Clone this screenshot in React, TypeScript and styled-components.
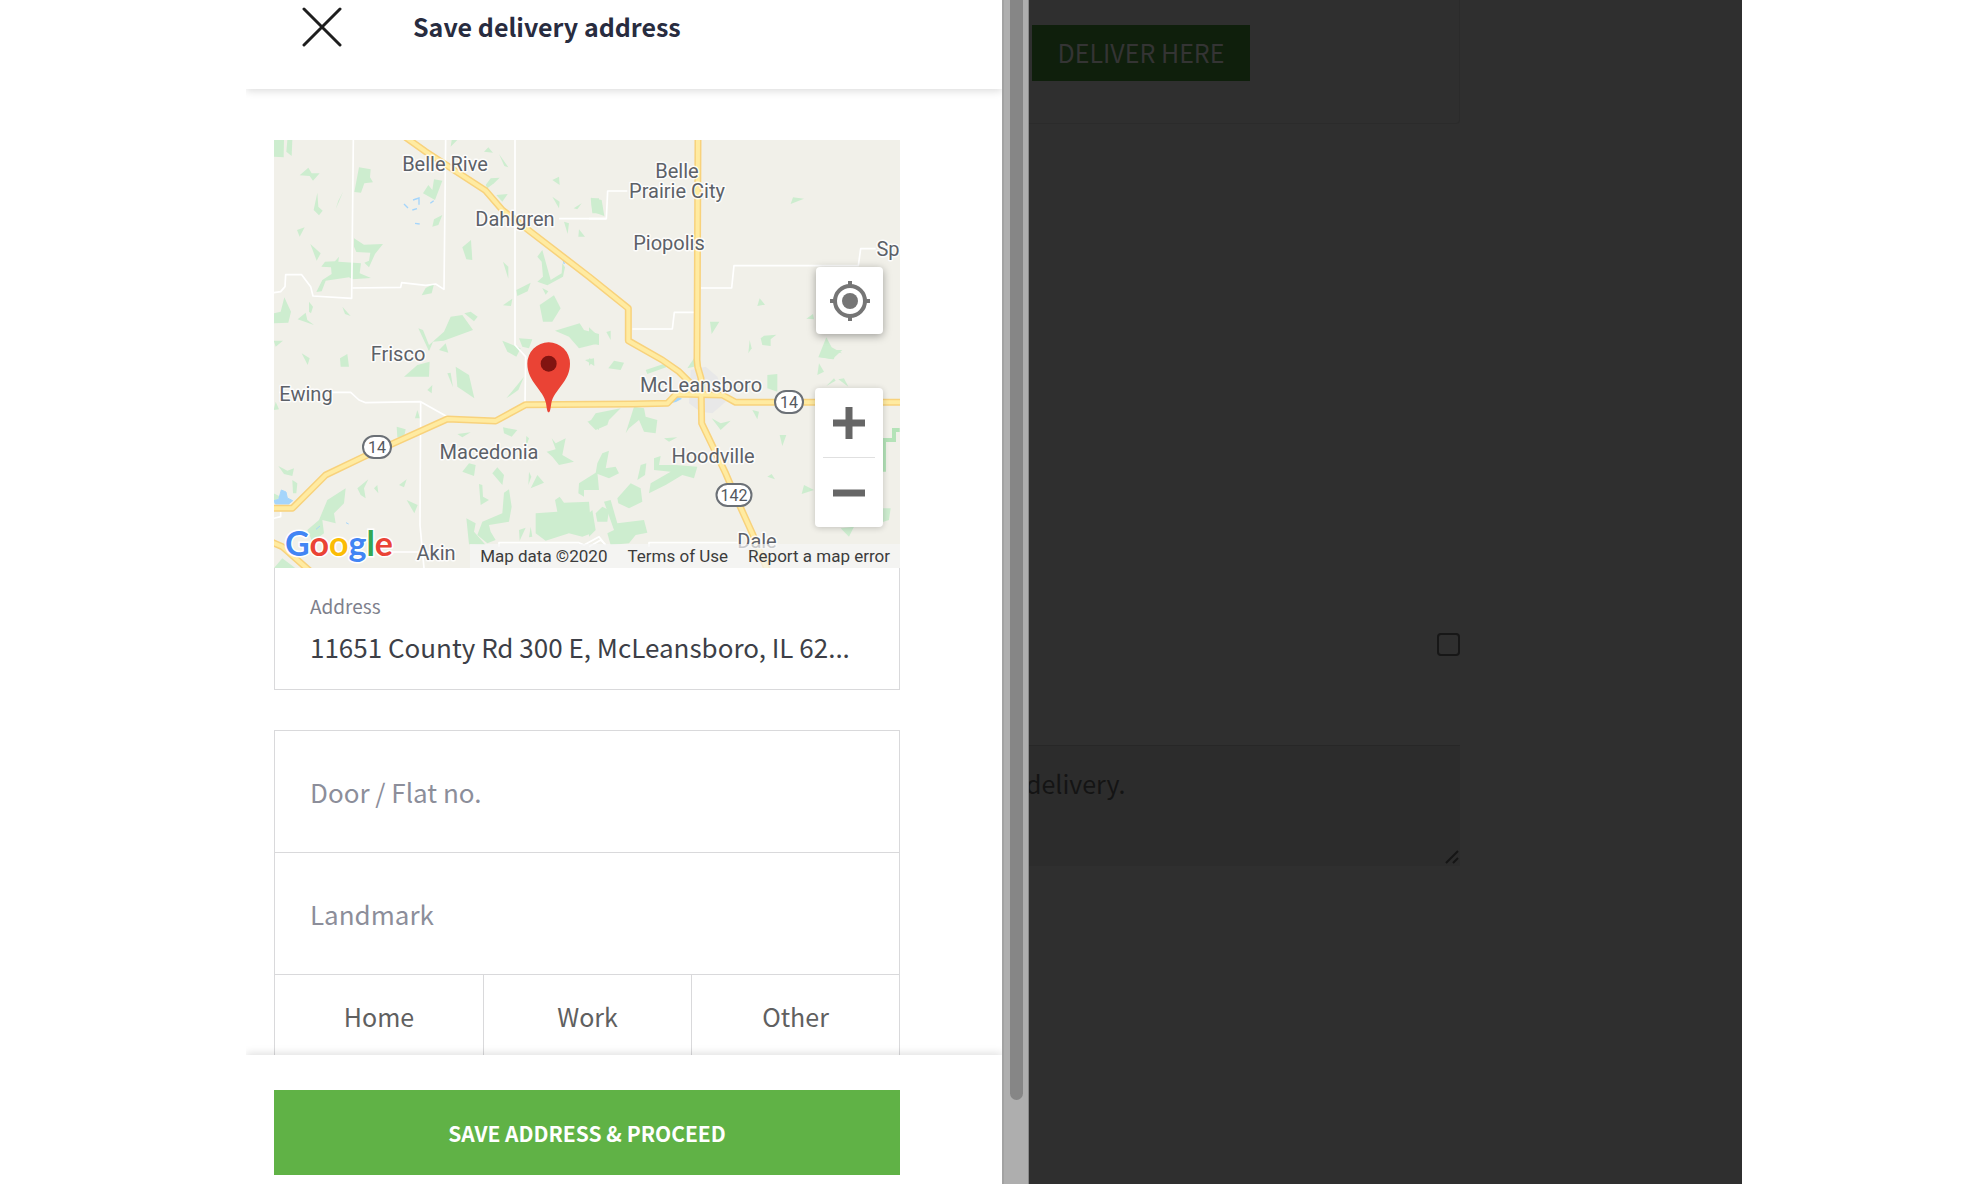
import React from "react";
import styled, { createGlobalStyle } from "styled-components";

const sans = '"Noto Sans CJK SC", "Noto Sans", sans-serif';
const mapSans = 'Roboto, "Liberation Sans", sans-serif';
const line = "#d9d9db";

const GlobalStyle = createGlobalStyle`
  *, *::before, *::after { box-sizing: border-box; }
  body { margin: 0; background: #fff; font-family: ${sans}; }
  button, input, textarea { font-family: inherit; margin: 0; }
`;

const Page = styled.div`
  display: grid;
  grid-template-columns: minmax(0, 756fr) 27px minmax(0, 713fr);
  grid-template-rows: minmax(0, 1fr);
  height: 100vh;
  padding: 0 246px;
  overflow: hidden;
`;

const Drawer = styled.section`
  display: flex;
  flex-direction: column;
  min-width: 0;
  background: #fff;
`;

const Header = styled.header`
  position: relative;
  z-index: 1;
  display: flex;
  align-items: flex-start;
  gap: 71px;
  padding: 7px 56px 42px;
  background: #fff;
  box-shadow: 0 2px 8px rgba(0, 0, 0, 0.14);
  clip-path: inset(0 0 -12px 0);
`;

const CloseButton = styled.button`
  display: block;
  width: 40px;
  height: 40px;
  padding: 0;
  border: 0;
  background: none;
`;

const Title = styled.h1`
  margin: 0;
  color: #282c3f;
  font-size: 25px;
  font-weight: 700;
  line-height: 38px;
`;

const Body = styled.div`
  flex: 1;
  min-height: 0;
  overflow: hidden;
  padding: 51px 102px 0 28px;
`;

const MapFrame = styled.div`
  position: relative;
  height: 428px;
  overflow: hidden;
  background: #f1f0e9;
  font-family: ${mapSans};
`;

const MapDrawing = styled.svg`
  display: block;
  width: 100%;
  height: 100%;
`;

const Credits = styled.div`
  position: absolute;
  right: 0;
  bottom: 0;
  display: flex;
  gap: 20px;
  padding: 0 10px;
  background: rgba(245, 245, 245, 0.7);
  color: #3c3c3c;
  font-size: 17px;
  font-weight: 400;
  line-height: 24px;
  white-space: nowrap;
`;

const CreditLink = styled.a`
  color: inherit;
  text-decoration: none;
`;

const MapControls = styled.div`
  position: absolute;
  top: 127px;
  right: 17px;
  display: flex;
  flex-direction: column;
  align-items: flex-end;
  gap: 54px;
`;

const LocateButton = styled.button`
  display: grid;
  place-items: center;
  width: 67px;
  height: 67px;
  padding: 0;
  border: 0;
  border-radius: 4px;
  background: #fff;
  box-shadow: 0 2px 8px rgba(0, 0, 0, 0.35);
`;

const ZoomGroup = styled.div`
  display: flex;
  flex-direction: column;
  align-items: center;
  border-radius: 4px;
  background: #fff;
  box-shadow: 0 1px 6px rgba(0, 0, 0, 0.2);
`;

const ZoomButton = styled.button`
  display: grid;
  place-items: center;
  width: 68px;
  height: 69px;
  padding: 0;
  border: 0;
  background: none;
`;

const ZoomRule = styled.div`
  width: 52px;
  height: 1px;
  background: #e0e0e0;
`;

const AddressField = styled.div`
  display: flex;
  flex-direction: column;
  height: 122px;
  margin-bottom: 40px;
  padding: 24px 35px 0;
  border: 1px solid ${line};
  border-top: 0;
`;

const FieldLabel = styled.label`
  color: #7e808c;
  font-size: 19px;
  line-height: 28px;
`;

const AddressInput = styled.input`
  width: 100%;
  height: 52px;
  padding: 0;
  border: 0;
  outline: 0;
  background: none;
  color: #3d3f47;
  font-size: 26px;
`;

const FieldGroup = styled.div`
  border: 1px solid ${line};
`;

const TextField = styled.input`
  display: block;
  width: 100%;
  height: 122px;
  padding: 0 35px;
  border: 0;
  border-bottom: 1px solid ${line};
  outline: 0;
  color: #3d3f47;
  font-size: 26px;
  &::placeholder { color: #8c8e9a; opacity: 1; }
`;

const TagRow = styled.div`
  display: grid;
  grid-template-columns: repeat(3, 1fr);
`;

const TagButton = styled.button`
  height: 84px;
  padding: 0 0 2px;
  border: 0;
  background: none;
  color: #606060;
  font-size: 25px;
  & + & { border-left: 1px solid ${line}; }
`;

const Footer = styled.footer`
  position: relative;
  z-index: 1;
  padding: 35px 102px 9px 28px;
  background: #fff;
  box-shadow: 0 -2px 8px rgba(0, 0, 0, 0.12);
  clip-path: inset(-12px 0 0 0);
`;

const SaveButton = styled.button`
  display: block;
  width: 100%;
  height: 85px;
  padding: 0;
  border: 0;
  background: #60b246;
  color: #fff;
  font-size: 21px;
  font-weight: 700;
`;

const Scrollbar = styled.div`
  padding: 0 5px 84px 6px;
  border-left: 2px solid #a2a2a2;
  border-right: 1px solid #888;
  background: #aeaeae;
`;

const ScrollThumb = styled.div`
  height: 100%;
  border-radius: 0 0 7px 7px;
  background: #868686;
`;

const Backdrop = styled.main`
  display: flex;
  flex-direction: column;
  min-width: 0;
  padding-right: 282px;
  background: #2f2f2f;
`;

const AddressCard = styled.div`
  height: 124px;
  padding: 25px 3px 0;
  border: 1px solid #2b2b2b;
  border-top: 0;
  border-left: 0;
  border-radius: 0 0 4px 0;
`;

const DeliverButton = styled.button`
  width: 218px;
  height: 56px;
  padding: 0 0 2px;
  border: 0;
  background: #0f1f0c;
  color: #343434;
  font-size: 25px;
  white-space: nowrap;
`;

const OptIn = styled.input`
  appearance: none;
  align-self: flex-end;
  width: 23px;
  height: 23px;
  margin: 509px 0 89px;
  border: 2px solid #171717;
  border-radius: 4px;
`;

const NoteWrap = styled.div`
  position: relative;
`;

const Note = styled.textarea`
  display: block;
  width: 100%;
  height: 121px;
  padding: 17px 0 0;
  border: 0;
  border-top: 1px solid #272727;
  background: #2c2c2c;
  color: #141414;
  font-size: 25px;
  line-height: 40px;
  text-indent: -3px;
  resize: none;
  outline: 0;
  overflow: hidden;
`;

const Grip = styled.svg`
  position: absolute;
  right: 1px;
  bottom: 2px;
`;

const Label = styled.text`
  fill: #5c6168;
  stroke: #fff;
  stroke-width: 3px;
  stroke-opacity: 0.85;
  stroke-linejoin: round;
  paint-order: stroke;
  font-family: ${mapSans};
  font-size: 20px;
  text-anchor: middle;
`;

const ShieldText = styled.text`
  fill: #54585e;
  font-family: ${mapSans};
  font-size: 16px;
  text-anchor: middle;
`;

const Wordmark = styled.text`
  stroke: #fff;
  stroke-width: 3px;
  paint-order: stroke;
  font-family: Lato, sans-serif;
  font-size: 34px;
  font-weight: 700;
`;

type Tile = { shift: string; woods: string[]; lanes: string[]; highways: string[] };

// The terrain is kept as four quadrants, each drawn at three units to the pixel.
const tiles: Tile[] = [
  {
    shift: "translate(-15 -30)",
    woods: [
      "14,30 45,30 44,82 14,80", "55,30 70,30 68,78 52,65", "92,136 118,113 128,130 152,130 132,152 122,138",
      "270,112 305,118 303,142 312,157 286,160 276,188 256,186", "145,188 148,230 161,242 150,256 134,240",
      "222,186 200,238 208,212", "84,300 107,292 92,320", "124,342 155,370 143,392",
      "255,325 285,344 342,342 318,372 300,412 286,398 300,392 304,368 262,366 255,350",
      "157,410 168,395 198,394 210,380 208,395 276,400 272,430 306,444 250,448 240,442 170,452 158,484 142,486 160,450 188,432 186,412",
      "458,496 470,474 495,462 488,490", "46,502 66,545 58,578 14,580 14,550 35,545", "120,515 132,530 126,550 120,545",
      "86,568 110,548 115,570 135,585", "220,530 245,558 228,552", "14,632 42,632 20,650", "548,30 565,30 545,50",
      "645,65 658,52 672,68", "690,72 718,112 706,108", "650,165 665,145 692,143 675,160 655,175", "682,195 716,192 700,215",
      "495,148 520,152 498,210 462,190 478,165 490,180", "490,290 495,268 520,255 508,285", "580,352 606,330 610,390 592,388",
      "702,395 718,410 718,446", "805,380 820,360 845,450 878,430 880,400 888,412 882,440 835,466 805,455 822,440 818,395",
      "742,480 785,458 776,484 745,498", "820,474 838,484 830,494", "702,526 730,506 726,528",
      "812,525 855,496 875,535 850,575 822,575", "850,150 870,140 872,165", "850,200 872,215 870,235", "914,235 938,220 925,238",
      "965,205 990,205 990,250 970,250", "885,275 900,280 896,312", "930,298 948,320 928,320", "586,550 605,545 626,560 615,574",
      "545,560 580,555 612,600 524,632 492,635 480,664 448,595 462,600 480,645 525,605", "510,660 530,640 538,668",
      "700,632 755,655 742,680 715,665", "750,625 790,628 780,655 760,650", "858,602 932,580 945,600 990,612 990,640 930,655 900,620",
    ],
    lanes: [
      "14,488 35,485 48,470 50,434 98,434 125,470 132,498 248,505 253,30", "250,474 395,472 398,458 470,466 500,462 525,478 530,30",
      "738,30 738,645 770,680 768,820", "870,266 1012,266",
    ],
    highways: ["410,22 470,65 650,182 700,240 960,440 1078,535 1078,632 1180,690 1230,725 1265,760"],
  },
  {
    shift: "translate(945 -30)",
    woods: [
      "6,203 38,210 46,258 10,245", "605,222 612,202 645,206", "505,528 512,505 528,524", "363,575 391,575 368,612",
      "515,625 525,617 562,614 545,628 545,648 520,645", "482,630 488,655 478,670", "652,566 672,552 675,568",
      "712,622 728,652 760,670 738,666 735,688 688,682", "0,592 30,620 30,645 0,640", "52,606 65,602 65,630",
    ],
    lanes: ["0,266 52,266 56,183 115,183", "335,474 428,474 435,407 808,407 815,356 860,356", "130,597 250,597 256,547 315,547"],
    highways: ["327,20 324,690 326,710 336,745 338,880 410,1030 440,1100 490,1210 535,1320"],
  },
  {
    shift: "translate(-15 630)",
    woods: [
      "98,10 122,25 116,45", "213,25 235,12 240,50 215,50", "405,80 445,45 482,35 480,80", "535,70 545,68 552,112",
      "560,50 600,75 616,145 565,110", "712,145 765,80 748,120", "475,120 490,105 488,130", "438,205 445,180 453,205",
      "14,180 20,155 30,178", "383,230 410,238 405,262 385,262", "565,252 605,247 580,262", "702,232 745,240 728,260 705,250",
      "955,215 990,200 990,240", "848,265 860,280 890,265 880,315 915,335 870,345 850,320 833,305 860,298", "772,258 780,265 770,295",
      "580,365 600,340 620,345 615,378", "28,348 55,362 75,355 70,378 45,372", "265,415 298,388 285,415 290,445 275,435",
      "315,415 325,405 328,430", "390,405 413,388 405,412", "413,450 446,465 436,490", "670,370 685,352 705,375 700,405",
      "780,365 787,380 778,405", "785,415 805,375 825,398", "630,402 640,405 642,440 660,450 635,465",
      "705,428 720,418 728,470 720,515 660,525 665,545 680,570 655,580 625,555 640,515 700,490", "592,505 620,520 615,545 650,585 600,583",
      "750,540 770,533 752,572", "785,530 790,560 780,562", "800,490 865,485 858,450 872,440 885,458 960,455 968,550 940,560 900,550 830,572 800,550",
      "930,400 985,365 990,420 945,420 945,440 928,430", "175,450 230,415 225,460 195,490 200,520 160,510 165,550 130,575 115,540 150,510",
      "14,655 40,625 80,655", "70,390 85,400 82,430 72,430", "14,430 35,440 14,455", "865,70 878,90 870,95", "948,30 975,25 976,48",
    ],
    lanes: [
      "30,127 245,127 270,150 290,158 455,155 535,200", "455,155 453,525 465,655", "360,606 560,606",
      "690,590 690,578 930,578 945,585 990,560 1010,585", "14,505 35,500 35,485",
    ],
    highways: ["5,475 70,475 125,420 170,375 285,320 535,207 680,213 770,164 1090,162 1195,160 1222,132 1360,135 1400,157 1900,157", "5,575 40,590 125,665"],
  },
  {
    shift: "translate(945 630)",
    woods: [
      "58,55 75,32 105,38 95,60", "170,60 230,40 250,45 175,72", "295,55 315,25 315,50", "0,25 15,30 0,48",
      "0,220 20,190 95,175 60,210 55,225 20,240", "110,250 135,170 165,175 170,200 205,210 200,250 165,245 150,210 120,235",
      "368,205 395,220 425,212 395,240", "490,180 510,185 505,208", "535,75 565,72 565,125 535,115", "685,75 690,40 705,65",
      "690,20 700,0 760,0 730,28", "572,255 592,255 580,288", "225,265 265,262 240,275", "535,380 548,372 558,388",
      "638,432 645,405 675,420", "40,310 60,302 50,355 80,350 90,370 60,385 20,370 25,340", "145,390 155,345 172,340 168,375",
      "195,325 215,318 210,345 260,345 325,350 315,385 280,375 230,405 180,430 185,400 245,365 195,360",
      "85,445 125,400 155,415 160,455 120,475 88,460", "20,490 40,470 60,480 55,515 25,515",
      "45,455 65,450 85,520 165,510 175,548 140,555 120,580 65,585 55,550 75,540", "0,490 10,480 20,540 0,560",
      "755,535 795,530 780,560", "880,475 905,475 900,510 870,520", "712,108 735,85 740,92", "748,88 765,85 778,110", "0,395 20,385 25,405 0,415",
    ],
    lanes: ["0,590 35,570 50,585", "180,590 180,578 450,578"],
    highways: [],
  },
];

const places: [string, number, number][] = [
  ["Belle Rive", 171, 31], ["Dahlgren", 241, 86], ["Belle", 403, 38], ["Prairie City", 403, 58], ["Piopolis", 395, 110],
  ["Sp", 614, 116], ["Frisco", 124, 221], ["Ewing", 32, 261], ["Macedonia", 215, 319], ["McLeansboro", 427, 252],
  ["Hoodville", 439, 323], ["Dale", 483, 408], ["Akin", 162, 420],
];

const shields: [string, number, number, number][] = [["14", 103, 307, 28], ["14", 515, 262, 28], ["142", 460, 355, 35]];

const letters: [string, string][] = [
  ["G", "#4285f4"], ["o", "#ea4335"], ["o", "#fbbc05"], ["g", "#4285f4"], ["l", "#34a853"], ["e", "#ea4335"],
];

function AreaMap() {
  return (
    <MapDrawing viewBox="0 0 626 428" preserveAspectRatio="xMidYMid slice" role="img" aria-label="Map around McLeansboro">
      <g transform="scale(0.33333)">
        {tiles.map((t) => (
          <g key={t.shift} transform={t.shift} fill="#cdedcf">
            {t.woods.map((p) => <polygon key={p} points={p} />)}
          </g>
        ))}
        <g transform="translate(-15 -30)" fill="none" stroke="#a5d5fb" strokeWidth="4">
          <path d="M405 222l12 12M432 210l18-6v20M430 240l14-4M438 280l14 2M484 220l10-8M882 388l4 14" />
        </g>
        <path d="M0 1082l14-4 8-28 14 6 4 18 16 8-12 10H4zM126 1168l12-10M216 1148l8 4" fill="#a5d5fb" stroke="#a5d5fb" strokeWidth="3" />
        <path d="M1250 690l45-10 35 30 25 75-40 35-35-5-35-25z" fill="#e8e8e8" />
        <path d="M1190 790l18-22 16 8-18 10z" fill="#a5d5fb" />
        <path d="M1877 870h-17v30h-30v95" fill="none" stroke="#b4e3b8" strokeWidth="12" />
        {tiles.map((t) => (
          <g key={t.shift} transform={t.shift} fill="none" stroke="#fff" strokeWidth="5" strokeLinejoin="round">
            {t.lanes.map((p) => <polyline key={p} points={p} />)}
          </g>
        ))}
        {[{ c: "#f8d27c", w: 21 }, { c: "#ffeba1", w: 12 }].map((s) => (
          <g key={s.c} stroke={s.c} strokeWidth={s.w} fill="none" strokeLinejoin="round">
            {tiles.map((t) => (
              <g key={t.shift} transform={t.shift}>
                {t.highways.map((p) => <polyline key={p} points={p} />)}
              </g>
            ))}
          </g>
        ))}
      </g>
      {shields.map(([n, x, y, w]) => (
        <g key={`${n}-${x}`}>
          <rect x={x - w / 2} y={y - 11} width={w} height="22" rx="11" fill="#fff" stroke="#6b7076" strokeWidth="2" />
          <ShieldText x={x} y={y + 6}>{n}</ShieldText>
        </g>
      ))}
      {places.map(([name, x, y]) => <Label key={name} x={x} y={y}>{name}</Label>)}
      <g transform="scale(0.33333) translate(-15 630)">
        <path d="M839 187C835 187 834 180 831 160C824 120 775 95 775 41A64 64 0 0 1 903 41C903 95 854 120 847 160C844 180 843 187 839 187Z" fill="#ea4335" />
        <circle cx="839" cy="41" r="24" fill="#811411" />
      </g>
      <Wordmark x="11" y="416">
        {letters.map(([l, c], i) => <tspan key={i} fill={c}>{l}</tspan>)}
      </Wordmark>
    </MapDrawing>
  );
}

export default function App() {
  return (
    <>
      <GlobalStyle />
      <Page>
        <Drawer aria-label="Save delivery address">
          <Header>
            <CloseButton aria-label="Close">
              <svg width="40" height="40" viewBox="0 0 40 40" fill="none" stroke="#1e1e1e" strokeWidth="3" strokeLinecap="round">
                <path d="M2 2L38 38M38 2L2 38" />
              </svg>
            </CloseButton>
            <Title>Save delivery address</Title>
          </Header>
          <Body>
            <MapFrame>
              <AreaMap />
              <Credits>
                <span>Map data ©2020</span>
                <CreditLink href="#terms">Terms of Use</CreditLink>
                <CreditLink href="#report">Report a map error</CreditLink>
              </Credits>
              <MapControls>
                <LocateButton aria-label="Use my location">
                  <svg width="40" height="40" viewBox="0 0 40 40" fill="none" stroke="#757575" strokeWidth="4">
                    <circle cx="20" cy="20" r="15" />
                    <circle cx="20" cy="20" r="8" fill="#757575" stroke="none" />
                    <path d="M20 0v6M20 34v6M0 20h6M34 20h6" />
                  </svg>
                </LocateButton>
                <ZoomGroup>
                  <ZoomButton aria-label="Zoom in">
                    <svg width="32" height="32" viewBox="0 0 32 32" stroke="#666" strokeWidth="7"><path d="M16 0v32M0 16h32" /></svg>
                  </ZoomButton>
                  <ZoomRule />
                  <ZoomButton aria-label="Zoom out">
                    <svg width="32" height="32" viewBox="0 0 32 32" stroke="#666" strokeWidth="7"><path d="M0 16h32" /></svg>
                  </ZoomButton>
                </ZoomGroup>
              </MapControls>
            </MapFrame>
            <AddressField>
              <FieldLabel htmlFor="address">Address</FieldLabel>
              <AddressInput id="address" readOnly value="11651 County Rd 300 E, McLeansboro, IL 62..." />
            </AddressField>
            <FieldGroup>
              <TextField aria-label="Door / Flat no." placeholder="Door / Flat no." />
              <TextField aria-label="Landmark" placeholder="Landmark" />
              <TagRow>
                {["Home", "Work", "Other"].map((t) => <TagButton key={t}>{t}</TagButton>)}
              </TagRow>
            </FieldGroup>
          </Body>
          <Footer>
            <SaveButton>SAVE ADDRESS &amp; PROCEED</SaveButton>
          </Footer>
        </Drawer>
        <Scrollbar><ScrollThumb /></Scrollbar>
        <Backdrop>
          <AddressCard><DeliverButton>DELIVER HERE</DeliverButton></AddressCard>
          <OptIn type="checkbox" aria-label="Opt in for no-contact delivery" />
          <NoteWrap>
            <Note aria-label="Delivery note" defaultValue="delivery." />
            <Grip width="14" height="14" viewBox="0 0 14 14" stroke="#151515" strokeWidth="2" aria-hidden="true">
              <path d="M1 13L13 1M8 13L13 8" />
            </Grip>
          </NoteWrap>
        </Backdrop>
      </Page>
    </>
  );
}
